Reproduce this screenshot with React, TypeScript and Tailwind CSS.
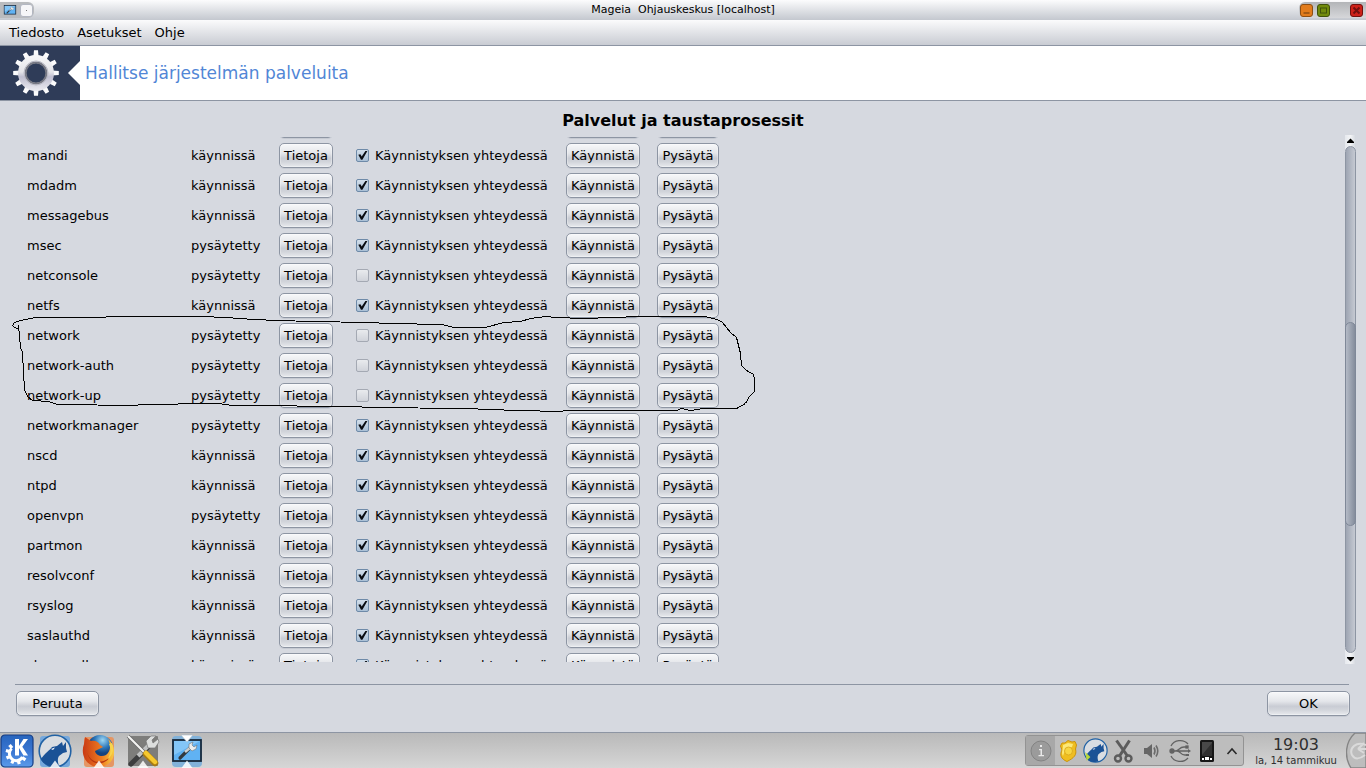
import { useLayoutEffect, useRef } from 'react';
import type { ReactNode } from 'react';

type Service = { name: string; running: boolean; onBoot: boolean };

const services: Service[] = [
  { name: 'mandi', running: true, onBoot: true },
  { name: 'mdadm', running: true, onBoot: true },
  { name: 'messagebus', running: true, onBoot: true },
  { name: 'msec', running: false, onBoot: true },
  { name: 'netconsole', running: false, onBoot: false },
  { name: 'netfs', running: true, onBoot: true },
  { name: 'network', running: false, onBoot: false },
  { name: 'network-auth', running: false, onBoot: false },
  { name: 'network-up', running: false, onBoot: false },
  { name: 'networkmanager', running: false, onBoot: true },
  { name: 'nscd', running: true, onBoot: true },
  { name: 'ntpd', running: true, onBoot: true },
  { name: 'openvpn', running: false, onBoot: true },
  { name: 'partmon', running: true, onBoot: true },
  { name: 'resolvconf', running: true, onBoot: true },
  { name: 'rsyslog', running: true, onBoot: true },
  { name: 'saslauthd', running: true, onBoot: true },
  { name: 'shorewall', running: true, onBoot: true },
];

function PushButton({ children, className }: { children?: ReactNode; className: string }) {
  return (
    <button
      type="button"
      className={`flex h-[25px] items-center justify-center rounded-[5px] border border-[#8d95a3] bg-[linear-gradient(#f7f8fa,#e4e6ea_40%,#c9ccd4_62%,#d2d5db_78%,#e8eaee)] shadow-[inset_0_0_0_1px_rgba(255,255,255,0.3),0_1px_0_#c6cad2] ${className}`}
    >
      {children}
    </button>
  );
}

function BootCheckbox({ checked }: { checked: boolean }) {
  return (
    <label className="flex h-[25px] items-center gap-1.5">
      <span className="grid size-[13px]">
        <input
          type="checkbox"
          defaultChecked={checked}
          className="peer col-start-1 row-start-1 size-[13px] appearance-none rounded-[2px] border border-[#a4a9b3] bg-linear-to-b from-[#e9ebee] to-[#d0d3da] checked:border-[#6e8aa8] checked:from-[#d3dfeb] checked:to-[#a9bfd5]"
        />
        <svg viewBox="0 0 13 13" className="pointer-events-none col-start-1 row-start-1 hidden size-[13px] peer-checked:block">
          <path d="M2.3 5.8 L4.4 5.2 L5.7 7.6 L9.4 1.9 L11.4 1.9 L6.4 10.8 L5 10.8 Z" fill="#0a0d12" />
        </svg>
      </span>
      Käynnistyksen yhteydessä
    </label>
  );
}

function ServiceTable() {
  return (
    <table className="table-fixed border-collapse text-left">
      <colgroup>
        <col className="w-[164px]" />
        <col className="w-[88px]" />
        <col className="w-[77px]" />
        <col className="w-[210px]" />
        <col className="w-[91px]" />
        <col className="w-[62px]" />
      </colgroup>
      <tbody>
        <tr className="h-[30px] align-top" aria-hidden="true">
          <td className="p-0" colSpan={2} />
          <td className="p-0"><PushButton className="w-[54px]" /></td>
          <td className="p-0" />
          <td className="p-0"><PushButton className="w-[74px]" /></td>
          <td className="p-0"><PushButton className="w-[62px]" /></td>
        </tr>
        {services.map((s) => (
          <tr key={s.name} className="h-[30px] align-top leading-[25px]">
            <td className="p-0">{s.name}</td>
            <td className="p-0">{s.running ? 'käynnissä' : 'pysäytetty'}</td>
            <td className="p-0"><PushButton className="w-[54px]">Tietoja</PushButton></td>
            <td className="p-0"><BootCheckbox checked={s.onBoot} /></td>
            <td className="p-0"><PushButton className="w-[74px]">Käynnistä</PushButton></td>
            <td className="p-0"><PushButton className="w-[62px]">Pysäytä</PushButton></td>
          </tr>
        ))}
      </tbody>
    </table>
  );
}

function PenMark() {
  return (
    <svg viewBox="-0.5 -0.5 760 110" className="pointer-events-none absolute top-[174px] left-0 h-[110px] w-[760px]" fill="none" stroke="#000" strokeWidth="1" shapeRendering="crispEdges">
      <path d="M18 18 L17 19 L14 18 L12 16 L14 13 L20 11 L35 8 L75 8 L137 7 L202 7 L225 8 L254 10 L277 11 L312 12 L367 13 L390 14 L442 15 L453 18 L485 18 L503 13 L520 12 L530 9 L545 7 L555 8 L583 9 L640 7 L704 7 L717 10 L722 13 L730 23 L736 28 L740 44 L741 56 L746 61 L753 65 L754 70 L754 82 L749 87 L745 94 L736 99 L718 99 L703 99 L690 101 L681 99 L676 101 L567 101 L558 102 L485 100 L470 99 L365 98 L358 97 L232 96 L218 94 L139 95 L136 96 L57 95 L48 92 L32 91 L27 87 L24 80 L23 63 L22 43 L20 38 L18 16" />
    </svg>
  );
}

function Scrollbar() {
  return (
    <div className="flex w-[11px] flex-col bg-linear-to-r from-[#e6e9ee] via-[#f3f4f6] to-[#d2d6dd]" aria-hidden="true">
      <svg viewBox="0 0 11 11" className="size-[11px]"><path d="M5.5 3.5 L9 7 V8 H2 V7 Z" fill="#000" /></svg>
      <div className="flex-1 rounded-full border border-[#8d95a3] bg-linear-to-r from-[#9ea5b3] to-[#c5c9d2]">
        <div className="flex h-full flex-col">
          <div className="flex-[176]" />
          <div className="-mx-px flex-[202] rounded-full border border-[#7f8898] bg-linear-to-r from-[#b4bac6] to-[#858d9c]" />
          <div className="flex-[127]" />
        </div>
      </div>
      <svg viewBox="0 0 11 11" className="size-[11px]"><path d="M2 4 H9 V5 L5.5 8.5 L2 5 Z" fill="#000" /></svg>
    </div>
  );
}

const teeth = Array.from({ length: 12 }, (_, i) => i * 30);

function Gear() {
  return (
    <svg viewBox="0 0 48 48" className="size-12">
      <defs>
        <linearGradient id="gear" x1="0" y1="0" x2="0" y2="48" gradientUnits="userSpaceOnUse">
          <stop offset="0" stopColor="#fff" />
          <stop offset="0.48" stopColor="#e4e4e8" />
          <stop offset="0.58" stopColor="#bfbed0" />
          <stop offset="1" stopColor="#fff" />
        </linearGradient>
      </defs>
      {teeth.map((a) => (
        <path key={a} d="M21.4 8 L22 1.2 H26 L26.6 8 Z" fill="url(#gear)" transform={`rotate(${a} 24 24)`} />
      ))}
      <circle cx="24" cy="24" r="14" fill="none" stroke="url(#gear)" strokeWidth="8" />
      <circle cx="24" cy="24" r="10.4" fill="none" stroke="#777984" strokeWidth="2" />
      <circle cx="24" cy="24" r="12" fill="none" stroke="#b9b9c4" strokeWidth="1" />
    </svg>
  );
}

function KdeIcon() {
  return (
    <svg viewBox="0 0 34 34" className="size-[34px]">
      <defs><linearGradient id="kde" x1="0" y1="0" x2="0" y2="1"><stop stopColor="#2765bd" /><stop offset="0.5" stopColor="#3975d1" /><stop offset="1" stopColor="#5b9bea" /></linearGradient></defs>
      <rect x="1" y="1" width="32" height="32" rx="4" fill="url(#kde)" stroke="#163d83" strokeWidth="1.2" />
      <g fill="#fff">
        {[125, 165, 205, 245, 285, 320].map((a) => <rect key={a} x="15" y="8.5" width="3.2" height="4" transform={`rotate(${a} 16.5 19.5)`} />)}
      </g>
      <path d="M11.6 14.5 A7 7 0 1 0 22.5 23" fill="none" stroke="#fff" strokeWidth="3" />
      <path d="M15 5 H19 V12 L23.5 5 H28 L22.3 12.8 L28 21.5 H23.5 L19 14 V21.5 H15 Z" fill="#fff" />
    </svg>
  );
}

function WolfIcon({ className, tray }: { className: string; tray?: boolean }) {
  return (
    <svg viewBox="0 0 34 34" className={className}>
      {!tray && <rect x="2" y="2" width="30" height="31" rx="3" fill="#75a8dc" />}
      <circle cx="17" cy="17" r="15.8" fill="#d9dde2" stroke="#2162a5" strokeWidth="1.6" />
      <path d="M3 25 C6 20 12 16 14 13 L19 12 L24 8 L25 12 L28 8 L28 14 L29 18 L25 19 L21 22 C19 25 20 29 21 32 C12 34 5 30 3 25 Z" fill="#1b5296" />
      <path d="M13 15 L17 13.5 L15 16 Z" fill="#fff" />
      {tray && <path d="M3 19 L10 26 L5 31 Z" fill="#b8d83a" />}
    </svg>
  );
}

function FirefoxIcon() {
  return (
    <svg viewBox="0 0 34 34" className="size-[34px]">
      <defs>
        <radialGradient id="globe" cx="0.6" cy="0.2"><stop stopColor="#9ed7f3" /><stop offset="0.6" stopColor="#2d77ba" /><stop offset="1" stopColor="#15437f" /></radialGradient>
        <linearGradient id="fox"><stop stopColor="#c93a14" /><stop offset="0.6" stopColor="#ee7b21" /><stop offset="1" stopColor="#f8cc42" /></linearGradient>
      </defs>
      <rect x="2" y="3" width="30" height="30" rx="3" fill="#e59664" />
      <circle cx="18" cy="14" r="13" fill="url(#globe)" />
      <path d="M3 3 L9 7 C13 6 17 8 18 11 L21 13 L17 15 L13 17 C14 22 20 23 24 21 C29 17 29 11 26 5 C36 13 34 32 17 33 C4 33 -2 20 2 10 Z" fill="url(#fox)" />
      <path d="M5 18 C8 28 17 31 27 24 C23 31 8 33 5 18 Z" fill="#b8360f" />
      <path d="M30 9 C33 15 30 22 26 25 C29 19 29 15 27 10 Z" fill="#f7d44d" />
    </svg>
  );
}

function ToolsIcon() {
  return (
    <svg viewBox="0 0 34 34" className="size-[34px]">
      <rect x="2" y="2" width="30" height="30" rx="1" fill="#7d7d7b" />
      <path d="M5 30 L24 11" stroke="#3d3e3f" strokeWidth="5" strokeLinecap="round" />
      <path d="M12 22 L24 10" stroke="#bfc1c1" strokeWidth="4" />
      <path d="M22 14 L20 7 L25 2 L30 2 L26 6 L27 9 L32 5 L33 8 L29 14 Z" fill="#dcdedd" stroke="#777" strokeWidth="0.7" />
      <path d="M2 2 L20 20" stroke="#666" strokeWidth="3.6" />
      <path d="M2 2 L20 20" stroke="#f4f4f2" strokeWidth="2.2" />
      <path d="M20 20 L29 29" stroke="#a87b12" strokeWidth="6.5" strokeLinecap="round" />
      <path d="M20 19 L29 28" stroke="#f6c82e" strokeWidth="4.5" strokeLinecap="round" />
    </svg>
  );
}

function ControlCenterIcon({ className, task }: { className: string; task?: boolean }) {
  return (
    <svg viewBox="0 0 34 34" className={className}>
      {task && <rect x="2" y="2" width="30" height="31" rx="4" fill="#82b2d9" />}
      <rect x="3" y="6" width="28" height="21" fill="#60b2f3" stroke="#18283a" strokeWidth="1.8" />
      <path d="M4 7 H30 L4 21 Z" fill="#93cff9" opacity="0.7" />
      <path d="M10 24 L21 13" stroke="#32383e" strokeWidth="3.2" strokeLinecap="round" />
      <path d="M15 18 L21 13" stroke="#ccd0d2" strokeWidth="2.6" />
      <path d="M19 14 L19 10 L23 8 L22 11 L24 13 L27 11 L26 15 L22 17 Z" fill="#eceeee" stroke="#6d7378" strokeWidth="0.6" />
      {task && <path d="M11 1 H23 L17 8 Z" fill="#fff" stroke="#a7bac9" strokeWidth="0.6" />}
    </svg>
  );
}

function TaskButton({ label, children, marked = true }: { label: string; children: ReactNode; marked?: boolean }) {
  return (
    <button type="button" aria-label={label} className="relative size-[34px]">
      {children}
      {marked && (
        <svg viewBox="0 0 12 8" className="absolute bottom-0 left-[11px] h-2 w-3"><path d="M0.5 8 L6 0.5 L11.5 8 Z" fill="#fff" opacity="0.85" /></svg>
      )}
    </button>
  );
}

function Tray() {
  return (
    <div className="flex h-[31px] items-center rounded-[3px] border border-[#939393] bg-[#bdbdbd]">
      <div className="flex h-full w-[29px] items-center justify-center bg-[#a8a8a8]">
        <svg viewBox="0 0 24 24" className="size-6">
          <circle cx="12" cy="12" r="10" fill="#9b9b9b" stroke="#838383" />
          <path d="M11 6 H13 V8 H11 Z M10 10 H13 V16 H15 V17.3 H9.5 V16 H11.5 V11.3 H10 Z" fill="#e9e9e9" />
        </svg>
      </div>
      <svg viewBox="0 0 28 24" className="h-6 w-7">
        <path d="M7 4 L10 4 L13 1.5 L17 3 L20 2.5 L21.5 6 L20.5 10 C22 16 19 19 12 22.5 C6 20 4.5 16 7 11 L5.5 7 Z" fill="#efbe20" stroke="#cb930a" />
        <path d="M8 6 L13 4 L18 5 L17 8 L10 11 L8 17 C6 14 8 11 8 6 Z" fill="#fce878" />
        <circle cx="13.5" cy="12" r="4" fill="#f7d641" stroke="#d7a41a" strokeWidth="0.8" />
      </svg>
      <WolfIcon className="size-[25px]" tray />
      <svg viewBox="0 0 30 24" className="h-6 w-[30px]" fill="none" stroke="#5c5c5c">
        <path d="M8.5 1.5 L19.5 17" strokeWidth="3" /><path d="M21.5 1.5 L11.5 17" strokeWidth="3" />
        <circle cx="10" cy="19.5" r="3" strokeWidth="2.4" /><circle cx="20.5" cy="19.5" r="3" strokeWidth="2.4" />
      </svg>
      <svg viewBox="0 0 28 24" className="h-6 w-7" fill="none" stroke="#6b6b6b" strokeWidth="1.6">
        <path d="M6 9 H9 L14 5 V19 L9 15 H6 Z" fill="#666" stroke="none" /><path d="M16 8.5 Q18 12 16 15.5 M18 6.5 Q21.5 12 18 17.5" />
      </svg>
      <svg viewBox="0 0 28 24" className="h-6 w-7" fill="none" stroke="#626262" strokeWidth="1.3">
        <path d="M5 7 A10 9 0 0 1 22 5 M5 17 A10 9 0 0 0 22 19 M6 12 H23 M9 12 C13 12 13 8 18 8 H21 M11 12 C15 12 14 16 19 16 H21" />
        <circle cx="6" cy="12" r="2" fill="#626262" /><rect x="20" y="7" width="2" height="2" fill="#626262" /><path d="M20 15 H23 V17 H20 Z M22 10 L25 12 L22 14 Z" fill="#626262" stroke="none" />
      </svg>
      <svg viewBox="0 0 28 24" className="h-6 w-7">
        <rect x="6" y="1" width="14" height="22" rx="1.5" fill="#171717" /><rect x="8" y="3" width="10" height="14" fill="#484848" />
        <path d="M8 16 L18 4 V17 H8 Z" fill="#303030" /><path d="M8 19 H10 V21 H8 Z M11 18 H15 V21 H11 Z M16 19 H18 V21 H16 Z" fill="#fff" />
      </svg>
      <svg viewBox="0 0 21 24" className="h-6 w-[21px]"><path d="M5.5 15 L10 10 L14.5 15" fill="none" stroke="#292929" strokeWidth="1.6" /></svg>
    </div>
  );
}

export default function App() {
  const listRef = useRef<HTMLDivElement>(null);

  useLayoutEffect(() => {
    if (listRef.current) listRef.current.scrollTop = 24;
  }, []);

  return (
    <div className="flex h-screen flex-col overflow-hidden bg-[#d6d9e0] font-['DejaVu_Sans',sans-serif] text-[13px] text-black">
      <header className="grid h-5 shrink-0 grid-cols-[1fr_auto_1fr] items-center bg-linear-to-b from-[#fcfcfd] to-[#c4c8cf]">
        <div className="flex h-4 w-[34px] items-center gap-[3px] rounded-r-md bg-[#b9bbbe] pl-[3px]">
          <ControlCenterIcon className="h-[14px] w-[14px]" />
          <button type="button" aria-label="Ikkunavalikko" className="flex size-[13px] items-center justify-center rounded-[3px] border border-[#b3b7c2] bg-[#f6f6f8]"><span className="size-px bg-[#777]" /></button>
        </div>
        <h1 className="text-[11px] leading-5 whitespace-pre">Mageia  Ohjauskeskus [localhost]</h1>
        <div className="flex h-4 w-[67px] items-center justify-self-end rounded-l-md bg-linear-to-b from-[#b3b5b8] to-[#d6d7da] pl-px">
          <button type="button" aria-label="Pienennä" className="size-[13px] rounded-[3px] border border-[#8f4f12] bg-[#e27c1c]"><svg viewBox="0 0 11 11"><path d="M2.5 8 H8.5" stroke="#8f4f12" strokeWidth="1.5" /></svg></button>
          <button type="button" aria-label="Suurenna" className="ml-1 size-[13px] rounded-[3px] border border-[#40520a] bg-[#718b0c]"><svg viewBox="0 0 11 11"><rect x="2.5" y="3" width="6" height="5" fill="none" stroke="#40520a" /></svg></button>
          <button type="button" aria-label="Sulje" className="mr-[3px] ml-auto size-[13px] rounded-[3px] border border-[#71100e] bg-[#cd2119]"><svg viewBox="0 0 11 11"><path d="M2.5 2.5 L8.5 8.5 M8.5 2.5 L2.5 8.5" stroke="#71100e" strokeWidth="2" /></svg></button>
        </div>
      </header>

      <nav className="flex h-[26px] shrink-0 items-center gap-[13px] border-b border-[#8d95a3] bg-linear-to-b from-[#fbfbfc] to-[#c9ccd3] pl-[9px]">
        <button type="button">Tiedosto</button>
        <button type="button">Asetukset</button>
        <button type="button">Ohje</button>
      </nav>

      <div className="flex h-[55px] shrink-0 items-center border-b border-[#8d95a3] bg-white">
        <div className="flex h-full w-20 items-center justify-between bg-[#2f3c58] pl-3">
          <Gear />
          <svg viewBox="0 0 12 24" className="h-6 w-3"><path d="M12 0 L0 12 L12 24 Z" fill="#fff" /></svg>
        </div>
        <h2 className="pt-0.5 pl-[5px] text-[17px] text-[#5186d6]">Hallitse järjestelmän palveluita</h2>
      </div>

      <main className="flex min-h-0 flex-1 flex-col">
        <h3 className="pt-2 text-center text-[16px] leading-6 font-bold">Palvelut ja taustaprosessit</h3>
        <div className="flex min-h-0 flex-1 pt-[2px] pr-[10px]">
          <div className="relative flex min-w-0 flex-1 py-[2px]">
            <div ref={listRef} className="min-w-0 flex-1 overflow-hidden pl-[27px]">
              <ServiceTable />
            </div>
            <PenMark />
          </div>
          <Scrollbar />
        </div>
        <footer className="pt-5">
          <div className="mr-[17px] ml-[15px] border-t border-[#8d95a3]" />
          <div className="flex justify-between px-4 pt-1.5 pb-4">
            <PushButton className="w-[83px]">Peruuta</PushButton>
            <PushButton className="w-[83px]">OK</PushButton>
          </div>
        </footer>
      </main>

      <div className="flex h-9 shrink-0 items-center border-t border-[#8d95a3] bg-linear-to-b from-[#b9b9b9] to-[#d6d6d6]">
        <div className="flex gap-[10px] self-end">
          <div className="-mr-[6px] flex"><TaskButton label="Käynnistysvalikko" marked={false}><KdeIcon /></TaskButton></div>
          <TaskButton label="Mageia"><WolfIcon className="size-[34px]" /></TaskButton>
          <TaskButton label="Firefox"><FirefoxIcon /></TaskButton>
          <TaskButton label="Työkalut"><ToolsIcon /></TaskButton>
          <TaskButton label="Ohjauskeskus"><ControlCenterIcon className="size-[34px]" task /></TaskButton>
        </div>
        <div className="ml-auto"><Tray /></div>
        <div className="ml-3 flex w-[80px] flex-col items-center text-[#2f2f2f]">
          <time className="text-[16px] leading-5">19:03</time>
          <span className="text-[10px] leading-3 whitespace-nowrap">la, 14 tammikuu</span>
        </div>
        <button type="button" aria-label="Työpöydän asetukset" className="ml-2.5 w-5">
          <svg viewBox="0 0 20 35" className="h-[35px] w-5">
            <path d="M9 0 H20 V35 H5 C-2 24 -1 9 9 0 Z" fill="#bdbdbd" stroke="#858585" strokeWidth="1.4" />
            <path d="M20 12 C10 8 3 15 6 22 C9 27 14 26 19 22 M12 16 L20 16 M12 16 L18 10 M12 16 L18 20" fill="none" stroke="#dadada" strokeWidth="2" />
          </svg>
        </button>
      </div>
    </div>
  );
}
